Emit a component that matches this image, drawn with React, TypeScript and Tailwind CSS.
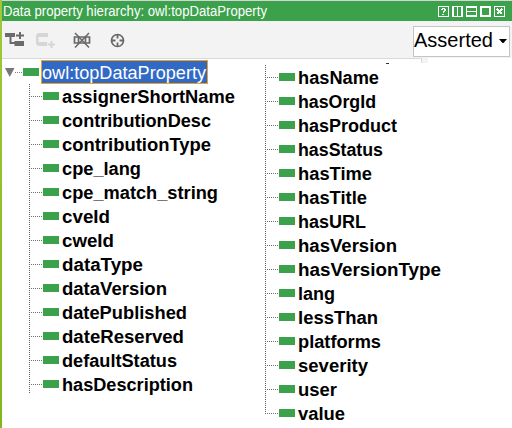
import React from "react";

const leftItems: [string, number][] = [
  ["assignerShortName", 173],
  ["contributionDesc", 149],
  ["contributionType", 149],
  ["cpe_lang", 79],
  ["cpe_match_string", 156],
  ["cveId", 48],
  ["cweId", 52],
  ["dataType", 81],
  ["dataVersion", 105],
  ["datePublished", 125],
  ["dateReserved", 122],
  ["defaultStatus", 115],
  ["hasDescription", 131],
];

const rightItems: [string, number][] = [
  ["hasName", 81],
  ["hasOrgId", 78],
  ["hasProduct", 99],
  ["hasStatus", 85],
  ["hasTime", 74],
  ["hasTitle", 69],
  ["hasURL", 68],
  ["hasVersion", 99],
  ["hasVersionType", 143],
  ["lang", 37],
  ["lessThan", 80],
  ["platforms", 83],
  ["severity", 70],
  ["user", 39],
  ["value", 47],
];

function Label({ text, width, className }: { text: string; width: number; className: string }) {
  return (
    <svg className="h-6 shrink-0 overflow-visible" width={width} height="24">
      <text x="0" y="19" textLength={width} lengthAdjust="spacingAndGlyphs" className={className}>
        {text}
      </text>
    </svg>
  );
}

function Tree({ items, trunk }: { items: [string, number][]; trunk: number }) {
  return (
    <div className="flex">
      <svg className="w-px shrink-0" width="1" height={trunk} shapeRendering="crispEdges">
        <path d={`M.5 0V${trunk}`} stroke="#606060" strokeDasharray="1 1" />
      </svg>
      <ul className="flex flex-col">
        {items.map(([name, width]) => (
          <li key={name} className="flex h-6 items-center">
            <svg className="mt-px shrink-0" width="13" height="1" shapeRendering="crispEdges">
              <path d="M1 .5H12" stroke="#707070" strokeDasharray="1 1" />
            </svg>
            <span className="mr-[3px] h-2 w-4 shrink-0 bg-[#3ba24b]" />
            <Label text={name} width={width} className="fill-black text-[18px] font-bold" />
          </li>
        ))}
      </ul>
    </div>
  );
}

function Toolbar() {
  return (
    <svg width="140" height="37" fill="none">
      <path
        fill="#6b6b6b"
        d="M3 12h10v4H9.500v5H12.500v-1H22v5H12.500v-2H7.500v-7H3zM14 13.500h3V11h2v2.500h3v2h-3V18h-2v-2.500h-3z"
      />
      <path
        fill="#d6d6d6"
        d="M36 12H46V16H36.500V21H45V25H36L34 23V14zM45.500 22.500h3V20h2v2.500H53v2h-2.500V27h-2v-2.500h-3z"
      />
      <g stroke="#686868">
        <path d="M72.500 16h15v6h-15zM76.500 16v6M83.500 16v6" strokeWidth="1.700" />
        <path d="M73 12L87 26.500M87 12L73 26.500" strokeWidth="1.500" />
      </g>
      <g stroke="#686868">
        <circle cx="115.500" cy="19.500" r="6" strokeWidth="1.700" />
        <path d="M115.500 13.500v4M115.500 21.500v4M109.500 19.500h4M117.500 19.500h4" strokeWidth="1.800" />
      </g>
    </svg>
  );
}

const controls = [
  <path key="help" d="M3 3.500H5M4 2.500H7M6.500 3V5M7.500 3V5M5 5.500H7M5 6.500H6M4 8.500H6" />,
  <path key="columns" d="M5.500 1V10M1.500 1V10M9.500 1V10" strokeWidth="1" />,
  <path key="rows" d="M1 5.500H10M1 1.500H10M1 9.500H10" strokeWidth="1" />,
  <path key="float" d="M1.500 1.500H9.500V9.500H1.500Z" />,
  <path key="close" d="M3 3L8 8M8 3L3 8" strokeWidth="2" />,
];

export default function App() {
  return (
    <div className="flex h-[428px] w-[512px] overflow-hidden bg-white font-['Liberation_Sans',Arial,sans-serif]">
      <div className="w-0.5 shrink-0 bg-linear-to-b from-[#a0c93a] to-[#83b51d]" />
      <div className="flex w-[510px] flex-col">
        <header className="flex h-[21px] shrink-0 items-center justify-between border-t border-[#d5d5d5] bg-[#3ba24b] pr-[7px] pl-px">
          <svg className="overflow-visible" width="270" height="20">
            <text x="0" y="15" textLength="264" lengthAdjust="spacingAndGlyphs" className="fill-white text-[14px]">
              Data property hierarchy: owl:topDataProperty
            </text>
          </svg>
          <div className="flex gap-[3px]">
            {controls.map((glyph, i) => (
              <svg key={i} width="11" height="11" fill="none" stroke="white" shapeRendering="crispEdges">
                <path d="M.5 .5H10.500V10.500H.5Z" />
                {glyph}
              </svg>
            ))}
          </div>
        </header>

        <div className="flex h-[37px] shrink-0 items-center justify-between bg-[#f3f3f3] pr-[2px]">
          <Toolbar />
          <button className="mt-[3px] flex h-[31px] w-[97px] items-center border border-[#c4c4c4] bg-white">
            <span className="flex pb-[3px]">
              <Label text="Asserted" width={79} className="fill-black text-[19.500px]" />
            </span>
            <svg className="ml-[6px]" width="8" height="5">
              <path d="M0 0H8L4.500 4H3.500Z" fill="black" />
            </svg>
          </button>
        </div>

        <div className="flex h-[5px] shrink-0">
          <div className="h-px w-[420px] bg-[#d9d9d9]">
            <div className="ml-[384px] h-[5px] w-[36px] border-r border-[#d9d9d9] pt-[5px]">
              <div className="h-px w-[3px] bg-[#333]" />
            </div>
          </div>
          <div className="w-[6px] bg-[#f3f3f3]" />
        </div>

        <main className="flex grow items-start">
          <section className="-mt-[3px] w-[263px]">
            <div className="flex h-6 items-center">
              <svg className="ml-[3px]" width="18" height="24" shapeRendering="crispEdges">
                <path d="M0 8H9.500L4.750 17Z" fill="#777" shapeRendering="auto" />
                <path d="M10 12.500H18" stroke="#808080" strokeDasharray="1 1" />
              </svg>
              <span className="h-2 w-4 bg-[#3ba24b]" />
              <div className="ml-[2px] flex h-6 w-[167px] items-center border border-[#f0a01e] bg-[#316ac5]">
                <Label text="owl:topDataProperty" width={164} className="fill-white text-[18.700px]" />
              </div>
            </div>
            <div className="ml-[27px]">
              <Tree items={leftItems} trunk={309} />
            </div>
          </section>
          <section className="flex">
            <div className="pt-[2px]">
              <Tree items={rightItems} trunk={349} />
            </div>
          </section>
        </main>
      </div>
    </div>
  );
}
